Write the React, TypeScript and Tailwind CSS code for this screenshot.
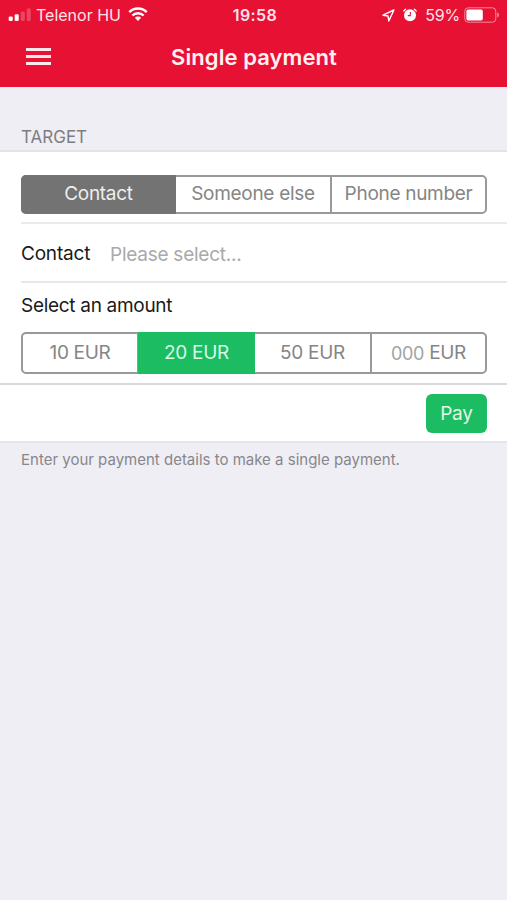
import { clsx } from "clsx";

const targets = [
  { label: "Contact", width: "w-[155px]" },
  { label: "Someone else", width: "w-[154px]" },
  { label: "Phone number", width: "flex-1" },
];
const selectedTarget = "Contact";

const amounts = [
  { value: "10", width: "w-[115px] border-r" },
  { value: "20", width: "w-[117px]" },
  { value: "50", width: "w-[115px]" },
  { value: "000", width: "flex-1", placeholder: true },
];
const selectedAmount = "20";

function SignalIcon() {
  return (
    <svg width="24" height="14" viewBox="0 0 24 14" fill="#fff">
      <rect x="0.7" y="8.4" width="4" height="4.6" rx="1" />
      <rect x="6.7" y="6.2" width="4" height="6.8" rx="1" />
      <rect x="12.8" y="3.4" width="4" height="9.6" rx="1" opacity="0.22" />
      <rect x="18.8" y="0.6" width="4" height="12.4" rx="1" opacity="0.22" />
    </svg>
  );
}

function WifiIcon() {
  return (
    <svg width="20" height="14" viewBox="0 0 20 14" fill="none" stroke="#fff">
      <path d="M1.3 5.1a12.4 12.4 0 0 1 17.4 0" strokeWidth="2.5" />
      <path d="M4.4 8.5a8 8 0 0 1 11.2 0" strokeWidth="2.4" />
      <path d="M10 14 6.9 10.8a4.4 4.4 0 0 1 6.2 0z" fill="#fff" stroke="none" />
    </svg>
  );
}

function LocationIcon() {
  return (
    <svg width="13" height="13" viewBox="0 0 13 13" fill="none" stroke="#fff">
      <path
        d="M11.9 1 1 6.2l5 .8.8 5z"
        strokeWidth="1.4"
        strokeLinejoin="round"
      />
    </svg>
  );
}

function AlarmIcon() {
  return (
    <svg width="14" height="14" viewBox="0 0 14 14" fill="none">
      <circle cx="7" cy="7.2" r="6" fill="#fff" />
      <path
        d="M.9 2.9A8 8 0 0 1 2.6 1.2M13.1 2.9A8 8 0 0 0 11.4 1.2"
        stroke="#fff"
        strokeWidth="1.4"
        strokeLinecap="round"
      />
      <path d="M7.3 4v3.6H4.8" stroke="#e71134" strokeWidth="1.1" />
    </svg>
  );
}

function BatteryIcon() {
  return (
    <svg width="36" height="16" viewBox="0 0 36 16" fill="none">
      <rect
        x="0.8"
        y="0.8"
        width="31"
        height="14.4"
        rx="3.4"
        stroke="#fff"
        strokeOpacity="0.5"
      />
      <rect x="2.4" y="2.6" width="16.4" height="10.8" rx="1.6" fill="#fff" />
      <path d="M33.2 5.6c2.4.8 2.4 4 0 4.8z" fill="#fff" fillOpacity="0.5" />
    </svg>
  );
}

function StatusBar() {
  return (
    <div className="flex h-[30px] items-center pl-2 pr-[7px] text-[#fde3e8]">
      <div className="flex flex-1 items-center">
        <SignalIcon />
        <span className="ml-1 text-[16px]">Telenor HU</span>
        <span className="-mt-0.5 ml-[7px]">
          <WifiIcon />
        </span>
      </div>
      <span className="pl-0.5 text-[16px] font-semibold tracking-[0.4px]">
        19:58
      </span>
      <div className="flex flex-1 items-center justify-end">
        <LocationIcon />
        <span className="ml-2">
          <AlarmIcon />
        </span>
        <span className="ml-2 text-[16px] tracking-[-0.2px]">59%</span>
        <span className="ml-1">
          <BatteryIcon />
        </span>
      </div>
    </div>
  );
}

function Header() {
  return (
    <header className="h-[87px] bg-[#e71134]">
      <StatusBar />
      <div className="flex h-[54px] items-center pl-[26px]">
        <button
          aria-label="Menu"
          className="-mt-0.5 flex w-[25px] flex-col gap-1"
        >
          <span className="h-[3px] bg-[#fde9ed]" />
          <span className="h-[3px] bg-[#fde9ed]" />
          <span className="h-[3px] bg-[#fde9ed]" />
        </button>
        <h1 className="flex-1 pr-[50px] text-center text-[22px] font-semibold tracking-[0.08px] text-[#fff1f3]">
          Single payment
        </h1>
      </div>
    </header>
  );
}

export default function App() {
  return (
    <div className="min-h-screen bg-[#efeef4] font-['Inter',sans-serif]">
      <Header />

      <h2 className="flex h-[65px] items-end border-b-2 border-[#e3e2e7] pb-px pl-[21px] text-[17px] leading-6 text-[#7d7d81]">
        TARGET
      </h2>

      <section className="bg-white">
        <div className="ml-[21px] h-[72px] border-b-2 border-[#ebebeb] pr-5 pt-[23px]">
          <div className="flex h-[39px] rounded-[5px] border-2 border-[#999999] text-[19px] tracking-[-0.3px]">
            {targets.map(({ label, width }) => (
              <button
                key={label}
                className={clsx(
                  "flex items-center justify-center border-[#999999] last:border-l-2",
                  width,
                  label === selectedTarget
                    ? "-my-0.5 -ml-0.5 rounded-l-[5px] bg-[#737373] text-[#eeeeee]"
                    : "text-[#858585]",
                )}
              >
                {label}
              </button>
            ))}
          </div>
        </div>

        <div className="ml-[21px] flex h-[59px] items-center border-b-2 border-[#e8e8e8] pt-[3px] text-[19px]">
          <span className="w-[89px] tracking-[-0.2px] text-[#1a1a1a]">
            Contact
          </span>
          <span className="pt-0.5 tracking-[-0.25px] text-[#a9a9a9]">
            Please select...
          </span>
        </div>

        <div className="h-[102px] border-b-2 border-[#dadada] pl-[21px] pr-5 pt-2">
          <p className="text-[19px] leading-[30px] tracking-[-0.3px] text-[#1a1a1a]">
            Select an amount
          </p>
          <div className="mt-[11px] flex h-[42px] rounded-[5px] border-2 border-[#999999] text-[19px] tracking-[-0.3px] text-[#858585]">
            {amounts.map(({ value, width, placeholder }) => (
              <button
                key={value}
                className={clsx(
                  "flex items-center justify-center gap-[5px] border-[#999999] last:border-l-2",
                  width,
                  value === selectedAmount &&
                    "-my-0.5 bg-[#1bbc62] text-[#d9f8e5]",
                )}
              >
                <span
                  className={clsx(placeholder && "text-[18px] text-[#a3a3a3]")}
                >
                  {value}
                </span>
                EUR
              </button>
            ))}
          </div>
        </div>

        <div className="flex h-[58px] items-center justify-end border-b-2 border-[#e6e6ea] pr-5">
          <button className="h-[39px] w-[61px] rounded-[6px] bg-[#1bbc62] pt-0.5 text-[19px] tracking-[-0.2px] text-[#e2faeb]">
            Pay
          </button>
        </div>
      </section>

      <p className="pl-[21px] pt-[7px] text-[15px] leading-5 text-[#87878b]">
        Enter your payment details to make a single payment.
      </p>
    </div>
  );
}
